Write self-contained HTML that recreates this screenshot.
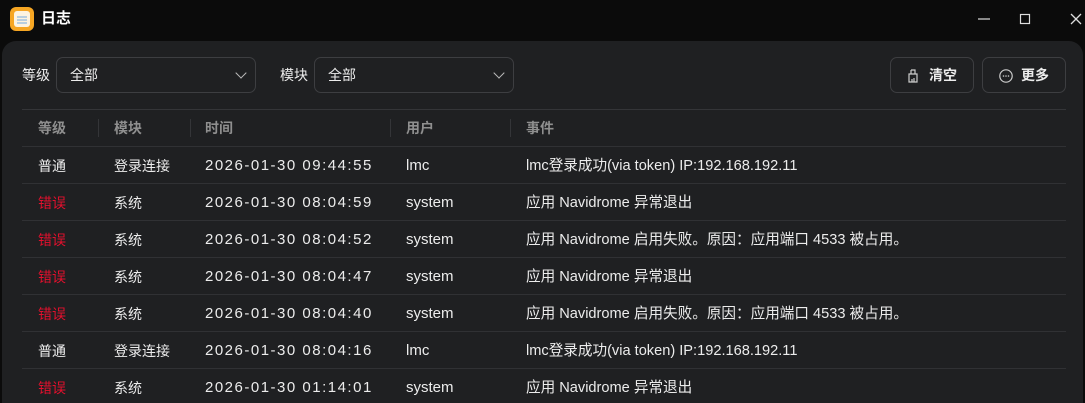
<!DOCTYPE html>
<html><head><meta charset="utf-8"><style>
*{margin:0;padding:0;box-sizing:border-box}
html,body{width:1085px;height:403px;overflow:hidden}
body{background:#0b0b0b;font-family:"Liberation Sans","Noto Sans CJK SC",sans-serif;color:#ececec;position:relative;font-size:14px;line-height:20px}
.title{position:absolute;left:41px;top:9px;font-size:15px;font-weight:bold;color:#fff}
.logo{position:absolute;left:10px;top:7px;width:24px;height:24px;border-radius:6px;background:#f6a623;}
.logo i{position:absolute;left:4px;top:4px;width:16px;height:16px;border-radius:3px;background:#fdf3e0}
.logo b{position:absolute;left:7px;height:2px;width:10px;background:#b9cfe0}
.panel{position:absolute;left:2px;top:41px;width:1081px;height:380px;background:#1f2022;border-radius:14px 14px 0 0}
.lbl{position:absolute;top:65px;font-size:14px}
.sel{position:absolute;top:57px;height:36px;border:1px solid #3d3e41;border-radius:7px;padding:7px 0 0 13px;font-size:14px}
.chev{position:absolute;right:10px;top:11px;width:8px;height:8px;border-right:1.6px solid #bbb;border-bottom:1.6px solid #bbb;transform:rotate(45deg)}
.btn{position:absolute;top:57px;height:36px;border:1px solid #3d3e41;border-radius:7px;font-size:14px;padding-top:7px;font-weight:bold}
.hdr{position:absolute;left:22px;width:1044px;top:109px;border-top:1px solid #343538;height:37px}
.hdr span{position:absolute;top:8px;color:#8f8f8f;font-weight:bold;font-size:14px}
.sep{position:absolute;top:9px;width:1px;height:18px;background:#343538}
.row{position:absolute;left:22px;width:1044px;height:37px;border-top:1px solid #303134}
.row span{position:absolute;top:9px;font-size:14px}
.row span.t{font-size:15px;letter-spacing:1.5px}
.row span.u{font-size:15px}
.row span.e{font-size:14.6px}
.err{color:#e3102d}
.ctl{position:absolute;top:0}
</style></head><body>
<div class="logo"><i></i><b style="top:9px"></b><b style="top:12px"></b><b style="top:15px"></b></div>
<div class="title">日志</div>
<svg class="ctl" style="left:970px" width="115" height="40"><line x1="8" y1="19" x2="20" y2="19" stroke="#ddd" stroke-width="1.2"/><rect x="50.5" y="14.5" width="9" height="9" fill="none" stroke="#ddd" stroke-width="1.2"/><path d="M101 14L111 24M111 14L101 24" stroke="#ddd" stroke-width="1.3"/></svg>
<div class="panel"></div>
<div class="lbl" style="left:22px">等级</div>
<div class="sel" style="left:56px;width:200px">全部<div class="chev"></div></div>
<div class="lbl" style="left:280px">模块</div>
<div class="sel" style="left:314px;width:200px">全部<div class="chev"></div></div>
<div class="btn" style="left:890px;width:84px;padding-left:38px">清空
<svg style="position:absolute;left:16px;top:11px" width="12" height="14"><path d="M4 1h4v4M4 1v4M2 5h8v8H2z M5 10v3M7 9v4" fill="none" stroke="#ccc" stroke-width="1.2"/></svg></div>
<div class="btn" style="left:982px;width:84px;padding-left:38px">更多
<svg style="position:absolute;left:15px;top:10px" width="16" height="16"><circle cx="8" cy="8" r="6.2" fill="none" stroke="#ccc" stroke-width="1.2"/><circle cx="5.5" cy="8" r=".8" fill="#ccc"/><circle cx="8" cy="8" r=".8" fill="#ccc"/><circle cx="10.5" cy="8" r=".8" fill="#ccc"/></svg></div>
<div class="hdr"><span style="left:16px">等级</span><div class="sep" style="left:76px"></div><span style="left:92px">模块</span><div class="sep" style="left:168px"></div><span style="left:183px">时间</span><div class="sep" style="left:368px"></div><span style="left:384px">用户</span><div class="sep" style="left:488px"></div><span style="left:504px">事件</span></div>
<div class="row" style="top:146px"><span style="left:16px">普通</span><span style="left:92px">登录连接</span><span class="t" style="left:183px">2026-01-30 09:44:55</span><span class="u" style="left:384px">lmc</span><span class="e" style="left:504px">lmc登录成功(via token) IP:192.168.192.11</span></div>
<div class="row" style="top:183px"><span class="err" style="left:16px">错误</span><span style="left:92px">系统</span><span class="t" style="left:183px">2026-01-30 08:04:59</span><span class="u" style="left:384px">system</span><span class="e" style="left:504px">应用 Navidrome 异常退出</span></div>
<div class="row" style="top:220px"><span class="err" style="left:16px">错误</span><span style="left:92px">系统</span><span class="t" style="left:183px">2026-01-30 08:04:52</span><span class="u" style="left:384px">system</span><span class="e" style="left:504px">应用 Navidrome 启用失败。原因：应用端口 4533 被占用。</span></div>
<div class="row" style="top:257px"><span class="err" style="left:16px">错误</span><span style="left:92px">系统</span><span class="t" style="left:183px">2026-01-30 08:04:47</span><span class="u" style="left:384px">system</span><span class="e" style="left:504px">应用 Navidrome 异常退出</span></div>
<div class="row" style="top:294px"><span class="err" style="left:16px">错误</span><span style="left:92px">系统</span><span class="t" style="left:183px">2026-01-30 08:04:40</span><span class="u" style="left:384px">system</span><span class="e" style="left:504px">应用 Navidrome 启用失败。原因：应用端口 4533 被占用。</span></div>
<div class="row" style="top:331px"><span style="left:16px">普通</span><span style="left:92px">登录连接</span><span class="t" style="left:183px">2026-01-30 08:04:16</span><span class="u" style="left:384px">lmc</span><span class="e" style="left:504px">lmc登录成功(via token) IP:192.168.192.11</span></div>
<div class="row" style="top:368px"><span class="err" style="left:16px">错误</span><span style="left:92px">系统</span><span class="t" style="left:183px">2026-01-30 01:14:01</span><span class="u" style="left:384px">system</span><span class="e" style="left:504px">应用 Navidrome 异常退出</span></div>
</body></html>
